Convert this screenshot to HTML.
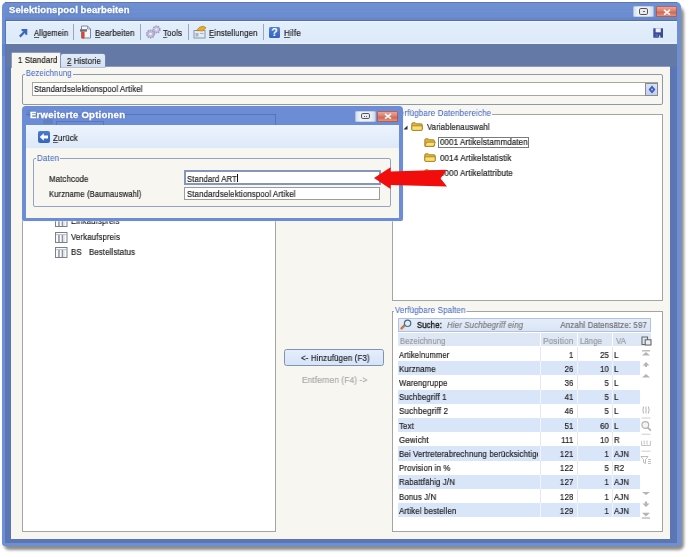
<!DOCTYPE html>
<html><head><meta charset="utf-8">
<style>
*{margin:0;padding:0;box-sizing:border-box}
html,body{width:691px;height:557px;overflow:hidden;background:#fff;font-family:"Liberation Sans",sans-serif;color:#1e1e1e}
.a{position:absolute}
.t{position:absolute;white-space:nowrap;line-height:10px;font-size:8.8px;letter-spacing:0.15px;-webkit-text-stroke:0.2px currentColor;will-change:transform}
.u{text-decoration:underline;text-underline-offset:1px;text-decoration-color:rgba(40,40,40,0.75)}
</style></head><body>
<div class="a" style="left:5px;top:6px;width:676px;height:540px;box-shadow:1px 2px 3px 2px rgba(0,0,0,0.45);border-radius:6px 6px 3px 3px;background:#999"></div>
<div class="a" style="left:2px;top:2px;width:678.5px;height:544px;background:#6c8fd6;border-radius:5px 5px 3px 3px"></div>
<div class="a" style="left:5px;top:3px;width:671.5px;height:14px;background:linear-gradient(#7090d0 0,#6e8fd0 40%,#6889cc 45%,#6f90d2 55%,#6a8bce 80%,#6c8dd0 100%)"></div>
<div class="a" style="left:5px;top:2px;width:671.5px;height:1.2px;background:#5b77b8"></div>
<div class="a" style="left:5px;top:20px;width:672px;height:523px;background:#5b76b2"></div>
<div class="a" style="left:5px;top:17px;width:672px;height:3px;background:linear-gradient(#6a89cb,#6584c4)"></div>
<div class="a" style="left:5px;top:20px;width:672px;height:1px;background:#5670ad"></div>
<div class="a" style="left:2px;top:44px;width:3px;height:12px;background:#5f86d4"></div>
<div class="t" style="left:9.3px;top:4.8px;font-size:9.3px;letter-spacing:0.1px;font-weight:bold;color:#fbfdff;line-height:10px;-webkit-text-stroke:0.35px #fbfdff;text-shadow:0 0 2px rgba(50,80,150,0.9);transform:scaleX(1.02);transform-origin:0 0">Selektionspool bearbeiten</div>
<div class="a" style="left:633.3px;top:6px;width:21px;height:11.4px;background:linear-gradient(90deg,#cfdbec,#eef4fb 25%,#e8eff8 75%,#c9d6e9);border-radius:1.5px;box-shadow:inset 0 0 0 0.6px rgba(120,140,180,0.6)"></div>
<div class="a" style="left:639.1999999999999px;top:8.4px;width:8.8px;height:6.2px;border:1.2px solid #555;background:#ebebeb;border-radius:1.8px"></div>
<div class="a" style="left:642.5px;top:11px;width:1px;height:1px;background:#666"></div>
<div class="a" style="left:644.1999999999999px;top:11px;width:1px;height:1px;background:#666"></div>
<div class="a" style="left:655.5999999999999px;top:6px;width:21px;height:11.4px;background:linear-gradient(#eeb0a0 0,#de8676 40%,#d06a56 60%,#e8a090 100%);border-radius:1.5px;box-shadow:inset 0 0 0 0.7px #9a5048"></div>
<svg class="a" style="left:662.5999999999999px;top:8.6px" width="8" height="6.5" viewBox="0 0 8 6.5"><path d="M1 0.8 L7 5.7 M7 0.8 L1 5.7" stroke="#fafafa" stroke-width="1.7"/></svg>
<div class="a" style="left:6px;top:21px;width:671px;height:23px;background:linear-gradient(#eef6fe 0,#e2eefb 10%,#ddeaf9 90%,#ecf4fd 100%)"></div>
<div class="a" style="left:6px;top:44px;width:671px;height:23px;background:#6479a6"></div>
<svg class="a" style="left:18px;top:28px" width="10" height="10" viewBox="0 0 10 10"><path d="M1.8 8.6 L7.6 2.8 M3.6 2.2 H8.2 V6.8" stroke="#3b64c4" stroke-width="2.2" fill="none" stroke-linecap="butt"/></svg>
<div id="x1" class="t" style="left:33.6px;top:28.40px;transform:scaleX(0.8575);transform-origin:0 0;"><span class="u">A</span>llgemein</div>
<div class="a" style="left:73px;top:23.5px;width:1px;height:16px;background:#9aa6ba"></div>
<svg class="a" style="left:79px;top:25px" width="13" height="15" viewBox="0 0 13 15"><path d="M2.5 1 H8.5 L11.5 4 V13 H2.5 Z" fill="#f4f7fb" stroke="#7d8aa2" stroke-width="1"/><path d="M8.5 1 V4 H11.5" fill="none" stroke="#7d8aa2" stroke-width="0.8"/><path d="M1 4.2 H8 V6.6 H1 Z" fill="#6a6f7a"/><path d="M2.6 6.6 H5.6 V12.8 Q4.1 14.8 2.6 12.8 Z" fill="#d9482e"/></svg>
<div id="x2" class="t" style="left:94.8px;top:28.40px;transform:scaleX(0.8971);transform-origin:0 0;"><span class="u">B</span>earbeiten</div>
<div class="a" style="left:140px;top:23.5px;width:1px;height:16px;background:#9aa6ba"></div>
<svg class="a" style="left:145px;top:25px" width="16" height="14" viewBox="0 0 16 14"><circle cx="5.5" cy="9" r="3.8" fill="#c0bbd8" stroke="#9d97bd" stroke-width="1.4" stroke-dasharray="1.5 0.9"/><circle cx="5.5" cy="9" r="1.3" fill="#f0f0fa"/><circle cx="11.5" cy="4.5" r="3.4" fill="#c6c1de" stroke="#9d97bd" stroke-width="1.4" stroke-dasharray="1.5 0.9"/><circle cx="11.5" cy="4.5" r="1.1" fill="#f0f0fa"/></svg>
<div id="x3" class="t" style="left:162.9px;top:28.40px;transform:scaleX(0.8982);transform-origin:0 0;"><span class="u">T</span>ools</div>
<div class="a" style="left:187.5px;top:23.5px;width:1px;height:16px;background:#9aa6ba"></div>
<svg class="a" style="left:193px;top:25px" width="14" height="14" viewBox="0 0 14 14"><rect x="1" y="5.5" width="11" height="7.5" fill="#e4ebf5" stroke="#8794ab" stroke-width="1"/><rect x="2.5" y="8" width="3" height="3.5" fill="#a3b4d0"/><rect x="7" y="8" width="3.5" height="1" fill="#a3b4d0"/><path d="M3.5 5.5 L6.5 2.2 L10.5 1.2 L13 2.8 L9.5 6 Z" fill="#e9ac22" stroke="#b07810" stroke-width="0.7"/></svg>
<div id="x4" class="t" style="left:208.6px;top:28.40px;transform:scaleX(0.8856);transform-origin:0 0;"><span class="u">E</span>instellungen</div>
<div class="a" style="left:262.5px;top:23.5px;width:1px;height:16px;background:#9aa6ba"></div>
<div class="a" style="left:269px;top:27px;width:11px;height:11px;background:linear-gradient(#5482d8,#3462bc);border-radius:1.5px"></div>
<div class="a" style="left:271.3px;top:26.3px;font-size:10.5px;font-weight:bold;color:#fff;line-height:12px;font-family:'Liberation Sans'">?</div>
<div id="x5" class="t" style="left:283.5px;top:28.40px;transform:scaleX(0.9235);transform-origin:0 0;"><span class="u">H</span>ilfe</div>
<svg class="a" style="left:652.8px;top:27.5px" width="10.5" height="10" viewBox="0 0 10.5 10"><path d="M0.3 0.3 H10.2 V9.7 H0.3 Z" fill="#3b4a9a"/><rect x="2.6" y="0.3" width="5.2" height="4" fill="#eef0f8"/><path d="M5.5 9.7 L6.8 6.6 L7.6 9.7 Z" fill="#d8f0d8"/><rect x="2.4" y="6" width="2.6" height="3.5" fill="#5565ae"/></svg>
<div class="a" style="left:11px;top:67px;width:659px;height:472px;background:#f8f6f1"></div>
<div class="a" style="left:11px;top:66px;width:659px;height:1px;background:#8c9cc0"></div>
<div class="a" style="left:11px;top:52px;width:50px;height:16px;background:#f8f6f1;border-radius:2px 2px 0 0;border:1px solid #8c9cc0;border-bottom:none"></div>
<div id="x6" class="t" style="left:17.9px;top:55.40px;transform:scaleX(0.8851);transform-origin:0 0;">1 Standard</div>
<div class="a" style="left:61px;top:53.5px;width:44px;height:13.5px;background:linear-gradient(#e2ecf8,#d3e0f2);border-radius:2px 2px 0 0;box-shadow:0 0 0 0.5px #7f90b5"></div>
<div id="x7" class="t" style="left:67.3px;top:55.90px;transform:scaleX(0.8798);transform-origin:0 0;"><span class="u">2</span> Historie</div>
<div class="a" style="left:22px;top:74px;width:641px;height:30.5px;border:1px solid #8f98aa;border-radius:2px"></div>
<div id="x8" class="t" style="left:24.5px;top:68.30px;transform:scaleX(0.8705);transform-origin:0 0;color:#4a6fc2;background:#f8f6f1;padding:0 1px;-webkit-text-stroke:0.08px #4a6fc2">Bezeichnung</div>
<div class="a" style="left:31.5px;top:82px;width:626.5px;height:14px;background:#fff;border:1px solid #a5a5a5"></div>
<div id="x9" class="t" style="left:34px;top:84.10px;transform:scaleX(0.8878);transform-origin:0 0;">Standardselektionspool Artikel</div>
<div class="a" style="left:645.2px;top:82.5px;width:12.5px;height:13px;background:linear-gradient(#d6e0f8,#c2d0f2);border:1px solid #8a8a8a;border-left:1.5px solid #8a8a8a"></div>
<svg class="a" style="left:647.5px;top:84.5px" width="8" height="9" viewBox="0 0 8 9"><path d="M4 0.6 L7.4 4.5 L4 8.4 L0.6 4.5 Z" fill="#3d5bb0"/><circle cx="4" cy="4.5" r="1.1" fill="#aabde8"/></svg>
<div class="a" style="left:22px;top:114px;width:253.5px;height:418px;background:#fff;border:1px solid #a4a4a4"></div>
<svg class="a" style="left:54.6px;top:216px" width="13" height="11" viewBox="0 0 13 11"><rect x="0.5" y="0.5" width="11.5" height="10" fill="#f8fafc" stroke="#7a7f88" stroke-width="1"/><path d="M1 2.6 H11.5" stroke="#a9b0bc" stroke-width="0.8"/><rect x="3.2" y="3" width="1.5" height="7" fill="#8d939c"/><rect x="6.7" y="3" width="1.5" height="7" fill="#8d939c"/><rect x="8.2" y="3" width="1.4" height="7" fill="#d8e0ea"/></svg>
<div id="x10" class="t" style="left:70.8px;top:215.50px;transform:scaleX(0.8843);transform-origin:0 0;">Einkaufspreis</div>
<svg class="a" style="left:54.6px;top:231.8px" width="13" height="11" viewBox="0 0 13 11"><rect x="0.5" y="0.5" width="11.5" height="10" fill="#f8fafc" stroke="#7a7f88" stroke-width="1"/><path d="M1 2.6 H11.5" stroke="#a9b0bc" stroke-width="0.8"/><rect x="3.2" y="3" width="1.5" height="7" fill="#8d939c"/><rect x="6.7" y="3" width="1.5" height="7" fill="#8d939c"/><rect x="8.2" y="3" width="1.4" height="7" fill="#d8e0ea"/></svg>
<div id="x11" class="t" style="left:70.8px;top:231.70px;transform:scaleX(0.8875);transform-origin:0 0;">Verkaufspreis</div>
<svg class="a" style="left:54.6px;top:247.3px" width="13" height="11" viewBox="0 0 13 11"><rect x="0.5" y="0.5" width="11.5" height="10" fill="#f8fafc" stroke="#7a7f88" stroke-width="1"/><path d="M1 2.6 H11.5" stroke="#a9b0bc" stroke-width="0.8"/><rect x="3.2" y="3" width="1.5" height="7" fill="#8d939c"/><rect x="6.7" y="3" width="1.5" height="7" fill="#8d939c"/><rect x="8.2" y="3" width="1.4" height="7" fill="#d8e0ea"/></svg>
<div id="x12" class="t" style="left:70.8px;top:247.30px;transform:scaleX(0.8900);transform-origin:0 0;">BS</div>
<div id="x13" class="t" style="left:88.8px;top:247.30px;transform:scaleX(0.8900);transform-origin:0 0;">Bestellstatus</div>
<div class="a" style="left:392px;top:114px;width:271px;height:186.5px;background:#fff;border:1px solid #a4a4a4"></div>
<div id="x14" class="t" style="left:393.5px;top:107.90px;transform:scaleX(0.9063);transform-origin:0 0;color:#4a6fc2;background:linear-gradient(#f8f6f1 0,#f8f6f1 6.5px,#fff 6.5px);padding:0 1px;-webkit-text-stroke:0.08px #4a6fc2">Verfügbare Datenbereiche</div>
<svg class="a" style="left:402.5px;top:124.5px" width="5" height="5" viewBox="0 0 5 5"><path d="M4.5 0.5 V4.5 H0.5 Z" fill="#2a2a2a"/></svg>
<svg class="a" style="left:411px;top:121.8px" width="12" height="9" viewBox="0 0 12 9"><path d="M0.8 2 Q0.8 0.8 2 0.8 H4.2 L5.2 1.8 H10 Q11.2 1.8 11.2 3 V7.4 Q11.2 8.4 10.2 8.4 H1.8 Q0.8 8.4 0.8 7.4 Z" fill="#e2b43c" stroke="#a07c24" stroke-width="0.9"/><path d="M0.8 3.8 H11.2 V7.4 Q11.2 8.4 10.2 8.4 H1.8 Q0.8 8.4 0.8 7.4 Z" fill="#fadd6e" stroke="#a07c24" stroke-width="0.8"/></svg>
<div id="x15" class="t" style="left:427.3px;top:121.50px;transform:scaleX(0.8809);transform-origin:0 0;">Variablenauswahl</div>
<svg class="a" style="left:424px;top:137.5px" width="12" height="9" viewBox="0 0 12 9"><path d="M0.8 2 Q0.8 0.8 2 0.8 H4.2 L5.2 1.8 H9.4 Q10.4 1.8 10.4 2.8 V7.8 Q10.4 8.4 9.6 8.4 H1.6 Q0.8 8.4 0.8 7.6 Z" fill="#e2b43c" stroke="#a07c24" stroke-width="0.9"/><path d="M0.9 8.3 L2.6 4.2 H11.3 L9.7 8.3 Z" fill="#fbe07a" stroke="#a07c24" stroke-width="0.8" stroke-linejoin="round"/></svg>
<div class="a" style="left:437.8px;top:136.5px;width:91.2px;height:11.5px;border:1px solid #7a7a7a"></div>
<div id="x16" class="t" style="left:440.2px;top:137.40px;transform:scaleX(0.8982);transform-origin:0 0;">0001 Artikelstammdaten</div>
<svg class="a" style="left:424px;top:153px" width="12" height="9" viewBox="0 0 12 9"><path d="M0.8 2 Q0.8 0.8 2 0.8 H4.2 L5.2 1.8 H10 Q11.2 1.8 11.2 3 V7.4 Q11.2 8.4 10.2 8.4 H1.8 Q0.8 8.4 0.8 7.4 Z" fill="#e2b43c" stroke="#a07c24" stroke-width="0.9"/><path d="M0.8 3.8 H11.2 V7.4 Q11.2 8.4 10.2 8.4 H1.8 Q0.8 8.4 0.8 7.4 Z" fill="#fadd6e" stroke="#a07c24" stroke-width="0.8"/></svg>
<div id="x17" class="t" style="left:440.2px;top:153.30px;transform:scaleX(0.9108);transform-origin:0 0;">0014 Artikelstatistik</div>
<svg class="a" style="left:424px;top:168.5px" width="12" height="9" viewBox="0 0 12 9"><path d="M0.8 2 Q0.8 0.8 2 0.8 H4.2 L5.2 1.8 H10 Q11.2 1.8 11.2 3 V7.4 Q11.2 8.4 10.2 8.4 H1.8 Q0.8 8.4 0.8 7.4 Z" fill="#e2b43c" stroke="#a07c24" stroke-width="0.9"/><path d="M0.8 3.8 H11.2 V7.4 Q11.2 8.4 10.2 8.4 H1.8 Q0.8 8.4 0.8 7.4 Z" fill="#fadd6e" stroke="#a07c24" stroke-width="0.8"/></svg>
<div id="x18" class="t" style="left:440.2px;top:168.40px;transform:scaleX(0.9016);transform-origin:0 0;">0000 Artikelattribute</div>
<div class="a" style="left:392px;top:310.5px;width:271px;height:221px;background:#fff;border:1px solid #a4a4a4"></div>
<div id="x19" class="t" style="left:394.2px;top:305.10px;transform:scaleX(0.9054);transform-origin:0 0;color:#4a6fc2;background:linear-gradient(#f8f6f1 0,#f8f6f1 5.5px,#fff 5.5px);padding:0 1px;-webkit-text-stroke:0.08px #4a6fc2">Verfügbare Spalten</div>
<div class="a" style="left:284.3px;top:349.3px;width:100px;height:17.2px;background:linear-gradient(#e4eefc,#d6e4f8);border:1px solid #8192b4;border-radius:2.5px"></div>
<div id="x20" class="t" style="left:301.1px;top:353.40px;transform:scaleX(0.8997);transform-origin:0 0;">&lt;- Hinzufügen (F3)</div>
<div id="x21" class="t" style="left:301.6px;top:374.80px;transform:scaleX(0.9370);transform-origin:0 0;color:#a9a9a9">Entfernen (F4) -&gt;</div>
<div class="a" style="left:398px;top:318px;width:253px;height:13.5px;background:linear-gradient(#e5edf9,#dae4f5);border:1px solid #b3c2dc"></div>
<svg class="a" style="left:400px;top:319px" width="12" height="11" viewBox="0 0 12 11"><path d="M4.2 6.6 L1.6 9.4" stroke="#c87a40" stroke-width="2.4" stroke-linecap="round"/><circle cx="7.6" cy="4.3" r="3.2" fill="#d8f0fb" stroke="#55657c" stroke-width="1.2"/></svg>
<div id="x22" class="t" style="left:416.9px;top:320.00px;transform:scaleX(0.8772);transform-origin:0 0;color:#1a1a1a;-webkit-text-stroke:0.4px #1a1a1a">Suche:</div>
<div id="x23" class="t" style="left:447.2px;top:320.10px;transform:scaleX(0.8936);transform-origin:0 0;font-style:italic;color:#7e7e7e">Hier Suchbegriff eing</div>
<div id="x24" class="t" style="left:540px;top:320.10px;transform:scaleX(0.8958);transform-origin:100% 0;width:107px;text-align:right;color:#707070">Anzahl Datensätze: 597</div>
<div class="a" style="left:398px;top:333.2px;width:253px;height:13.3px;background:#dde7f6"></div>
<div class="a" style="left:540px;top:333.2px;width:1px;height:13.3px;background:#fafcff"></div>
<div class="a" style="left:576.5px;top:333.2px;width:1px;height:13.3px;background:#fafcff"></div>
<div class="a" style="left:612px;top:333.2px;width:1px;height:13.3px;background:#fafcff"></div>
<div id="x25" class="t" style="left:400.2px;top:335.50px;transform:scaleX(0.8647);transform-origin:0 0;color:#999">Bezeichnung</div>
<div id="x26" class="t" style="left:543px;top:335.50px;transform:scaleX(0.9380);transform-origin:0 0;color:#999">Position</div>
<div id="x27" class="t" style="left:579.6px;top:335.50px;transform:scaleX(0.8689);transform-origin:0 0;color:#999">Länge</div>
<div id="x28" class="t" style="left:615.8px;top:335.50px;transform:scaleX(0.8900);transform-origin:0 0;color:#999">VA</div>
<svg class="a" style="left:640.5px;top:335.5px" width="11" height="10" viewBox="0 0 11 10"><path d="M1 1 H6.5 V8.5 H1 Z" fill="none" stroke="#666" stroke-width="1.1"/><path d="M4.2 3.8 H10 V9 H4.2 Z" fill="#eee" stroke="#666" stroke-width="1.1"/></svg>
<div class="a" style="left:398px;top:347.0px;width:242px;height:14.2px;background:#fff"></div>
<div class="a" style="left:540px;top:347.0px;width:1px;height:14.2px;background:#e2e9f3"></div>
<div class="a" style="left:576.5px;top:347.0px;width:1px;height:14.2px;background:#e2e9f3"></div>
<div class="a" style="left:612px;top:347.0px;width:1px;height:14.2px;background:#e2e9f3"></div>
<div id="x29" class="t" style="left:399.3px;top:349.50px;transform:scaleX(0.8593);transform-origin:0 0;width:156px;overflow:hidden">Artikelnummer</div>
<div id="x30" class="t" style="left:541px;top:349.50px;transform:scaleX(0.8900);transform-origin:100% 0;width:32.5px;text-align:right">1</div>
<div id="x31" class="t" style="left:577px;top:349.50px;transform:scaleX(0.8900);transform-origin:100% 0;width:32px;text-align:right">25</div>
<div id="x32" class="t" style="left:613.8px;top:349.50px;transform:scaleX(0.8900);transform-origin:0 0;">L</div>
<div class="a" style="left:398px;top:361.2px;width:242px;height:14.2px;background:#d9e6f9"></div>
<div class="a" style="left:540px;top:361.2px;width:1px;height:14.2px;background:#f2f6fc"></div>
<div class="a" style="left:576.5px;top:361.2px;width:1px;height:14.2px;background:#f2f6fc"></div>
<div class="a" style="left:612px;top:361.2px;width:1px;height:14.2px;background:#f2f6fc"></div>
<div id="x33" class="t" style="left:399.3px;top:363.70px;transform:scaleX(0.8900);transform-origin:0 0;width:156px;overflow:hidden">Kurzname</div>
<div id="x34" class="t" style="left:541px;top:363.70px;transform:scaleX(0.8900);transform-origin:100% 0;width:32.5px;text-align:right">26</div>
<div id="x35" class="t" style="left:577px;top:363.70px;transform:scaleX(0.8900);transform-origin:100% 0;width:32px;text-align:right">10</div>
<div id="x36" class="t" style="left:613.8px;top:363.70px;transform:scaleX(0.8900);transform-origin:0 0;">L</div>
<div class="a" style="left:398px;top:375.4px;width:242px;height:14.2px;background:#fff"></div>
<div class="a" style="left:540px;top:375.4px;width:1px;height:14.2px;background:#e2e9f3"></div>
<div class="a" style="left:576.5px;top:375.4px;width:1px;height:14.2px;background:#e2e9f3"></div>
<div class="a" style="left:612px;top:375.4px;width:1px;height:14.2px;background:#e2e9f3"></div>
<div id="x37" class="t" style="left:399.3px;top:377.90px;transform:scaleX(0.8900);transform-origin:0 0;width:156px;overflow:hidden">Warengruppe</div>
<div id="x38" class="t" style="left:541px;top:377.90px;transform:scaleX(0.8900);transform-origin:100% 0;width:32.5px;text-align:right">36</div>
<div id="x39" class="t" style="left:577px;top:377.90px;transform:scaleX(0.8900);transform-origin:100% 0;width:32px;text-align:right">5</div>
<div id="x40" class="t" style="left:613.8px;top:377.90px;transform:scaleX(0.8900);transform-origin:0 0;">L</div>
<div class="a" style="left:398px;top:389.6px;width:242px;height:14.2px;background:#d9e6f9"></div>
<div class="a" style="left:540px;top:389.6px;width:1px;height:14.2px;background:#f2f6fc"></div>
<div class="a" style="left:576.5px;top:389.6px;width:1px;height:14.2px;background:#f2f6fc"></div>
<div class="a" style="left:612px;top:389.6px;width:1px;height:14.2px;background:#f2f6fc"></div>
<div id="x41" class="t" style="left:399.3px;top:392.10px;transform:scaleX(0.8900);transform-origin:0 0;width:156px;overflow:hidden">Suchbegriff 1</div>
<div id="x42" class="t" style="left:541px;top:392.10px;transform:scaleX(0.8900);transform-origin:100% 0;width:32.5px;text-align:right">41</div>
<div id="x43" class="t" style="left:577px;top:392.10px;transform:scaleX(0.8900);transform-origin:100% 0;width:32px;text-align:right">5</div>
<div id="x44" class="t" style="left:613.8px;top:392.10px;transform:scaleX(0.8900);transform-origin:0 0;">L</div>
<div class="a" style="left:398px;top:403.8px;width:242px;height:14.2px;background:#fff"></div>
<div class="a" style="left:540px;top:403.8px;width:1px;height:14.2px;background:#e2e9f3"></div>
<div class="a" style="left:576.5px;top:403.8px;width:1px;height:14.2px;background:#e2e9f3"></div>
<div class="a" style="left:612px;top:403.8px;width:1px;height:14.2px;background:#e2e9f3"></div>
<div id="x45" class="t" style="left:399.3px;top:406.30px;transform:scaleX(0.9165);transform-origin:0 0;width:156px;overflow:hidden">Suchbegriff 2</div>
<div id="x46" class="t" style="left:541px;top:406.30px;transform:scaleX(0.8900);transform-origin:100% 0;width:32.5px;text-align:right">46</div>
<div id="x47" class="t" style="left:577px;top:406.30px;transform:scaleX(0.8900);transform-origin:100% 0;width:32px;text-align:right">5</div>
<div id="x48" class="t" style="left:613.8px;top:406.30px;transform:scaleX(0.8900);transform-origin:0 0;">L</div>
<div class="a" style="left:398px;top:418.0px;width:242px;height:14.2px;background:#d9e6f9"></div>
<div class="a" style="left:540px;top:418.0px;width:1px;height:14.2px;background:#f2f6fc"></div>
<div class="a" style="left:576.5px;top:418.0px;width:1px;height:14.2px;background:#f2f6fc"></div>
<div class="a" style="left:612px;top:418.0px;width:1px;height:14.2px;background:#f2f6fc"></div>
<div id="x49" class="t" style="left:399.3px;top:420.50px;transform:scaleX(0.8900);transform-origin:0 0;width:156px;overflow:hidden">Text</div>
<div id="x50" class="t" style="left:541px;top:420.50px;transform:scaleX(0.8900);transform-origin:100% 0;width:32.5px;text-align:right">51</div>
<div id="x51" class="t" style="left:577px;top:420.50px;transform:scaleX(0.8900);transform-origin:100% 0;width:32px;text-align:right">60</div>
<div id="x52" class="t" style="left:613.8px;top:420.50px;transform:scaleX(0.8900);transform-origin:0 0;">L</div>
<div class="a" style="left:398px;top:432.2px;width:242px;height:14.2px;background:#fff"></div>
<div class="a" style="left:540px;top:432.2px;width:1px;height:14.2px;background:#e2e9f3"></div>
<div class="a" style="left:576.5px;top:432.2px;width:1px;height:14.2px;background:#e2e9f3"></div>
<div class="a" style="left:612px;top:432.2px;width:1px;height:14.2px;background:#e2e9f3"></div>
<div id="x53" class="t" style="left:399.3px;top:434.70px;transform:scaleX(0.9031);transform-origin:0 0;width:156px;overflow:hidden">Gewicht</div>
<div id="x54" class="t" style="left:541px;top:434.70px;transform:scaleX(0.8900);transform-origin:100% 0;width:32.5px;text-align:right">111</div>
<div id="x55" class="t" style="left:577px;top:434.70px;transform:scaleX(0.8900);transform-origin:100% 0;width:32px;text-align:right">10</div>
<div id="x56" class="t" style="left:613.8px;top:434.70px;transform:scaleX(0.8900);transform-origin:0 0;">R</div>
<div class="a" style="left:398px;top:446.4px;width:242px;height:14.2px;background:#d9e6f9"></div>
<div class="a" style="left:540px;top:446.4px;width:1px;height:14.2px;background:#f2f6fc"></div>
<div class="a" style="left:576.5px;top:446.4px;width:1px;height:14.2px;background:#f2f6fc"></div>
<div class="a" style="left:612px;top:446.4px;width:1px;height:14.2px;background:#f2f6fc"></div>
<div id="x57" class="t" style="left:399.3px;top:448.90px;transform:scaleX(0.8900);transform-origin:0 0;width:156px;overflow:hidden">Bei Vertreterabrechnung berücksichtige</div>
<div id="x58" class="t" style="left:541px;top:448.90px;transform:scaleX(0.8900);transform-origin:100% 0;width:32.5px;text-align:right">121</div>
<div id="x59" class="t" style="left:577px;top:448.90px;transform:scaleX(0.8900);transform-origin:100% 0;width:32px;text-align:right">1</div>
<div id="x60" class="t" style="left:613.8px;top:448.90px;transform:scaleX(0.8900);transform-origin:0 0;">AJN</div>
<div class="a" style="left:398px;top:460.6px;width:242px;height:14.2px;background:#fff"></div>
<div class="a" style="left:540px;top:460.6px;width:1px;height:14.2px;background:#e2e9f3"></div>
<div class="a" style="left:576.5px;top:460.6px;width:1px;height:14.2px;background:#e2e9f3"></div>
<div class="a" style="left:612px;top:460.6px;width:1px;height:14.2px;background:#e2e9f3"></div>
<div id="x61" class="t" style="left:399.3px;top:463.10px;transform:scaleX(0.8900);transform-origin:0 0;width:156px;overflow:hidden">Provision in %</div>
<div id="x62" class="t" style="left:541px;top:463.10px;transform:scaleX(0.8900);transform-origin:100% 0;width:32.5px;text-align:right">122</div>
<div id="x63" class="t" style="left:577px;top:463.10px;transform:scaleX(0.8900);transform-origin:100% 0;width:32px;text-align:right">5</div>
<div id="x64" class="t" style="left:613.8px;top:463.10px;transform:scaleX(0.8900);transform-origin:0 0;">R2</div>
<div class="a" style="left:398px;top:474.8px;width:242px;height:14.2px;background:#d9e6f9"></div>
<div class="a" style="left:540px;top:474.8px;width:1px;height:14.2px;background:#f2f6fc"></div>
<div class="a" style="left:576.5px;top:474.8px;width:1px;height:14.2px;background:#f2f6fc"></div>
<div class="a" style="left:612px;top:474.8px;width:1px;height:14.2px;background:#f2f6fc"></div>
<div id="x65" class="t" style="left:399.3px;top:477.30px;transform:scaleX(0.8900);transform-origin:0 0;width:156px;overflow:hidden">Rabattfähig J/N</div>
<div id="x66" class="t" style="left:541px;top:477.30px;transform:scaleX(0.8900);transform-origin:100% 0;width:32.5px;text-align:right">127</div>
<div id="x67" class="t" style="left:577px;top:477.30px;transform:scaleX(0.8900);transform-origin:100% 0;width:32px;text-align:right">1</div>
<div id="x68" class="t" style="left:613.8px;top:477.30px;transform:scaleX(0.8900);transform-origin:0 0;">AJN</div>
<div class="a" style="left:398px;top:489.0px;width:242px;height:14.2px;background:#fff"></div>
<div class="a" style="left:540px;top:489.0px;width:1px;height:14.2px;background:#e2e9f3"></div>
<div class="a" style="left:576.5px;top:489.0px;width:1px;height:14.2px;background:#e2e9f3"></div>
<div class="a" style="left:612px;top:489.0px;width:1px;height:14.2px;background:#e2e9f3"></div>
<div id="x69" class="t" style="left:399.3px;top:491.50px;transform:scaleX(0.8900);transform-origin:0 0;width:156px;overflow:hidden">Bonus J/N</div>
<div id="x70" class="t" style="left:541px;top:491.50px;transform:scaleX(0.8900);transform-origin:100% 0;width:32.5px;text-align:right">128</div>
<div id="x71" class="t" style="left:577px;top:491.50px;transform:scaleX(0.8900);transform-origin:100% 0;width:32px;text-align:right">1</div>
<div id="x72" class="t" style="left:613.8px;top:491.50px;transform:scaleX(0.8900);transform-origin:0 0;">AJN</div>
<div class="a" style="left:398px;top:503.2px;width:242px;height:14.2px;background:#d9e6f9"></div>
<div class="a" style="left:540px;top:503.2px;width:1px;height:14.2px;background:#f2f6fc"></div>
<div class="a" style="left:576.5px;top:503.2px;width:1px;height:14.2px;background:#f2f6fc"></div>
<div class="a" style="left:612px;top:503.2px;width:1px;height:14.2px;background:#f2f6fc"></div>
<div id="x73" class="t" style="left:399.3px;top:505.70px;transform:scaleX(0.8898);transform-origin:0 0;width:156px;overflow:hidden">Artikel bestellen</div>
<div id="x74" class="t" style="left:541px;top:505.70px;transform:scaleX(0.8900);transform-origin:100% 0;width:32.5px;text-align:right">129</div>
<div id="x75" class="t" style="left:577px;top:505.70px;transform:scaleX(0.8900);transform-origin:100% 0;width:32px;text-align:right">1</div>
<div id="x76" class="t" style="left:613.8px;top:505.70px;transform:scaleX(0.8900);transform-origin:0 0;">AJN</div>
<svg class="a" style="left:640px;top:348px" width="12" height="176" viewBox="0 0 12 176"><path d="M2 2.8 H10" stroke="#b4b4b4" stroke-width="1.3"/><path d="M2 7.4 L6 4 L10 7.4 Z" fill="#b4b4b4"/><path d="M2.5 17.5 L6 14 L9.5 17.5 Z M4.9 17.4 H7.1 V19 H4.9 Z" fill="#b4b4b4"/><path d="M2 29.6 L6 26 L10 29.6 Z" fill="#b4b4b4"/><path d="M3.6 58.5 Q2.2 62 3.6 65.5 M8.4 58.5 Q9.8 62 8.4 65.5 M6 58.5 V65.5" stroke="#b4b4b4" stroke-width="1" fill="none"/><path d="M1.5 70 H10.5" stroke="#cdcdcd" stroke-width="1"/><circle cx="5.3" cy="77" r="3.4" fill="#f4f4f4" stroke="#b4b4b4" stroke-width="1.2"/><path d="M7.6 79.4 L10.8 82.6" stroke="#b4b4b4" stroke-width="1.8"/><path d="M1.5 86.2 H10.5" stroke="#cdcdcd" stroke-width="1"/><path d="M1.6 93 V97.5 H10.4 V93 M4.2 92.5 V96.5 M7 92.5 V96.5" stroke="#bcbcbc" stroke-width="0.9" fill="none"/><path d="M1.5 103.2 H10.5" stroke="#cdcdcd" stroke-width="1"/><path d="M1 108.5 H8 L5.5 111.5 V115.5 L3.5 114.5 V111.5 Z" fill="none" stroke="#b4b4b4" stroke-width="0.9"/><path d="M8 111.5 H11 M8 113.5 H11 M8 115.5 H11" stroke="#b4b4b4" stroke-width="0.8"/><path d="M2 144 L6 147 L10 144 Z" fill="#b4b4b4"/><path d="M2.5 155.5 L6 159 L9.5 155.5 Z M4.9 153.5 H7.1 V155.6 H4.9 Z" fill="#b4b4b4"/><path d="M2 164.8 L6 168.4 L10 164.8 Z" fill="#b4b4b4"/><path d="M2 170 H10" stroke="#b4b4b4" stroke-width="1.3"/></svg>
<div class="a" style="left:22px;top:106px;width:380.5px;height:115px;background:#6c8cd5;border-radius:4px 4px 2px 2px;box-shadow:0 0 0 0.6px rgba(235,242,252,0.7)"></div>
<div class="a" style="left:26px;top:113.5px;width:249.5px;height:1px;background:rgba(50,70,125,0.3)"></div>
<div class="a" style="left:275px;top:113.5px;width:1px;height:11px;background:rgba(50,70,125,0.3)"></div>
<div class="a" style="left:56px;top:121px;width:48px;height:3.5px;border:1px solid rgba(60,80,130,0.35);border-bottom:none"></div>
<div class="a" style="left:43px;top:119px;width:10px;height:5px;background:rgba(70,90,140,0.25);border-radius:3px 3px 0 0"></div>
<div class="t" style="left:25.5px;top:107.5px;color:rgba(40,60,120,0.22);-webkit-text-stroke:0">S</div>
<div class="t" style="left:30.3px;top:110.2px;font-size:8.8px;letter-spacing:0.2px;font-weight:bold;color:#fff;line-height:10px;-webkit-text-stroke:0.3px #fff;text-shadow:0 0 1.5px rgba(60,90,170,0.8);transform:scaleX(1.09);transform-origin:0 0">Erweiterte Optionen</div>
<div class="a" style="left:355px;top:110.6px;width:21px;height:11.4px;background:linear-gradient(90deg,#cfdbec,#eef4fb 25%,#e8eff8 75%,#c9d6e9);border-radius:1.5px;box-shadow:inset 0 0 0 0.6px rgba(120,140,180,0.6)"></div>
<div class="a" style="left:360.9px;top:113.0px;width:8.8px;height:6.2px;border:1.2px solid #555;background:#ebebeb;border-radius:1.8px"></div>
<div class="a" style="left:364.2px;top:115.6px;width:1px;height:1px;background:#666"></div>
<div class="a" style="left:365.9px;top:115.6px;width:1px;height:1px;background:#666"></div>
<div class="a" style="left:377.3px;top:110.6px;width:21px;height:11.4px;background:linear-gradient(#eeb0a0 0,#de8676 40%,#d06a56 60%,#e8a090 100%);border-radius:1.5px;box-shadow:inset 0 0 0 0.7px #9a5048"></div>
<svg class="a" style="left:384.3px;top:113.19999999999999px" width="8" height="6.5" viewBox="0 0 8 6.5"><path d="M1 0.8 L7 5.7 M7 0.8 L1 5.7" stroke="#fafafa" stroke-width="1.7"/></svg>
<div class="a" style="left:26px;top:124.5px;width:372.8px;height:23.3px;background:linear-gradient(#ecf4fd,#dde9f9)"></div>
<div class="a" style="left:26px;top:147.8px;width:372.8px;height:69.8px;background:#f8f6f1"></div>
<div class="a" style="left:38.2px;top:131.1px;width:11.8px;height:11.7px;background:linear-gradient(#4a7bd4,#3665c0);border-radius:2px"></div>
<svg class="a" style="left:38.2px;top:131.1px" width="12" height="12" viewBox="0 0 12 12"><path d="M1.8 6 L5.8 2.2 V4.6 H10 V7.4 H5.8 V9.8 Z" fill="#fff"/></svg>
<div id="x77" class="t" style="left:53px;top:133.00px;transform:scaleX(0.8936);transform-origin:0 0;"><span class="u">Z</span>urück</div>
<div class="a" style="left:33.3px;top:158.4px;width:358px;height:48.3px;border:1px solid #95a2c2;border-radius:2px"></div>
<div id="x78" class="t" style="left:35.5px;top:153.00px;transform:scaleX(0.9187);transform-origin:0 0;color:#4a6fc2;background:#f8f6f1;padding:0 1px;-webkit-text-stroke:0.08px #4a6fc2">Daten</div>
<div id="x79" class="t" style="left:48.9px;top:173.80px;transform:scaleX(0.8906);transform-origin:0 0;">Matchcode</div>
<div id="x80" class="t" style="left:49.1px;top:188.60px;transform:scaleX(0.8640);transform-origin:0 0;">Kurzname (Baumauswahl)</div>
<div class="a" style="left:183.5px;top:170px;width:197px;height:14.7px;background:#fff;border:2px solid #8696ba"></div>
<div id="x81" class="t" style="left:186.5px;top:173.70px;transform:scaleX(0.8790);transform-origin:0 0;">Standard ART</div>
<div class="a" style="left:237px;top:174.2px;width:1px;height:8px;background:#111"></div>
<div class="a" style="left:183.9px;top:187.3px;width:196.5px;height:12.8px;background:#fff;border:1px solid #9c9c9c"></div>
<div id="x82" class="t" style="left:186.8px;top:188.80px;transform:scaleX(0.8878);transform-origin:0 0;">Standardselektionspool Artikel</div>
<svg class="a" style="left:0;top:0" width="691" height="557" viewBox="0 0 691 557"><path d="M374 178 L390.6 167.2 L390.6 171.4 L446.4 169.8 L440.6 178.5 L447 186.4 L390.6 185 L390.6 188.9 Z" fill="#f20d0d"/></svg>
</body></html>
